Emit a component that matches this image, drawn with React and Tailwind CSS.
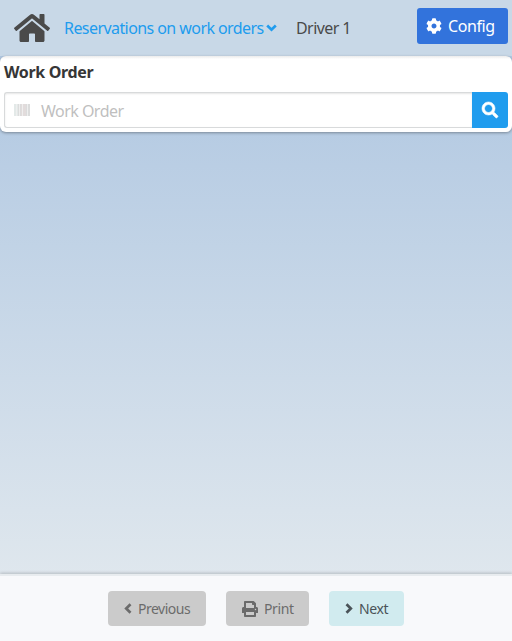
import { FaCog, FaSearch } from "react-icons/fa";

function HomeIcon({ className }) {
  return (
    <svg viewBox="0 0 576 512" fill="currentColor" className={className}>
      <path d="M488 312.7V456c0 13.3-10.7 24-24 24H348c-6.6 0-12-5.4-12-12V356c0-6.6-5.4-12-12-12h-72c-6.6 0-12 5.4-12 12v112c0 6.6-5.4 12-12 12H112c-13.3 0-24-10.7-24-24V312.7c0-3.6 1.6-7 4.4-9.3l188-154.8c4.4-3.6 10.8-3.6 15.3 0l188 154.8c2.7 2.3 4.3 5.7 4.3 9.3zm83.6-60.9L488 182.9V44.4c0-6.6-5.4-12-12-12h-56c-6.6 0-12 5.4-12 12V117l-89.5-73.7c-17.7-14.6-43.3-14.6-61 0L4.4 251.8c-5.1 4.2-5.8 11.8-1.6 16.9l25.5 31c4.2 5.1 11.8 5.8 16.9 1.6l235.2-193.7c4.4-3.6 10.8-3.6 15.3 0l235.2 193.7c5.1 4.2 12.7 3.5 16.9-1.6l25.5-31c4.2-5.2 3.4-12.7-1.7-16.9z" />
    </svg>
  );
}

function PrintIcon({ className }) {
  return (
    <svg viewBox="0 0 512 512" fill="currentColor" className={className}>
      <path d="M464 192h-16V81.941a24 24 0 0 0-7.029-16.97L383.029 7.029A24 24 0 0 0 366.059 0H88C74.745 0 64 10.745 64 24v168H48c-26.51 0-48 21.49-48 48v132c0 6.627 5.373 12 12 12h52v104c0 13.255 10.745 24 24 24h336c13.255 0 24-10.745 24-24V384h52c6.627 0 12-5.373 12-12V240c0-26.51-21.49-48-48-48zm-80 256H128v-96h256v96zM128 224V64h192v40c0 13.2 10.8 24 24 24h40v96H128zm304 72c-13.254 0-24-10.746-24-24s10.746-24 24-24 24 10.746 24 24-10.746 24-24 24z" />
    </svg>
  );
}

function BarcodeIcon({ className }) {
  return (
    <svg viewBox="0 0 16 12" className={className} shapeRendering="crispEdges">
      <path fill="#e3e9e8" d="M0 0h2v12H0zM3 0h1v12H3z" />
      <path fill="#dcdcdc" d="M4 0h1v12H4zM6 0h1v12H6z" />
      <path fill="#e2dcdc" d="M7 0h1v12H7zM9 0h3v12H9z" />
      <path fill="#dbdcdc" d="M12 0h1v12h-1zM14 0h2v12h-2z" />
      <path fill="#efefef" d="M2 0h1v12H2zM5 0h1v12H5zM8 0h1v12H8zM13 0h1v12h-1z" />
    </svg>
  );
}

function Chevron({ className, points, viewBox }) {
  return (
    <svg viewBox={viewBox} fill="none" stroke="currentColor" strokeWidth="2.7" className={className}>
      <polyline points={points} />
    </svg>
  );
}

function Header() {
  return (
    <header className="flex h-14 shrink-0 items-center bg-[#c8d8e7] pr-1 pl-3.5">
      <HomeIcon className="h-8 w-9 shrink-0 text-[#4a4a4a]" />
      <a className="ml-3.5 flex w-[214px] shrink-0 items-center whitespace-nowrap text-[#209cee]">
        <span className="w-[202px] shrink-0 tracking-[-0.57px]">Reservations on work orders</span>
        <Chevron className="h-2 w-[11px] shrink-0" viewBox="0 0 11 8" points="1.2,1.6 5.5,5.7 9.8,1.6" />
      </a>
      <span className="ml-[18px] tracking-[-0.58px] whitespace-nowrap text-[#4a4a4a]">Driver 1</span>
      <button className="mb-1 ml-auto flex h-9 w-[91px] items-center rounded-[3px] bg-[#3273dc] pl-[9px] text-white">
        <FaCog className="size-4 shrink-0" />
        <span className="ml-1.5 tracking-[-0.4px]">Config</span>
      </button>
    </header>
  );
}

function WorkOrderPanel() {
  return (
    <section className="h-[76px] shrink-0 rounded-md bg-white bg-linear-to-b from-[#ebebeb] to-white to-[3px] px-1 shadow-[0_1px_3px_rgba(10,10,10,0.35)]">
      <label className="block h-9 pt-1 leading-6 font-bold tracking-[-0.35px] text-[#363636]">
        Work Order
      </label>
      <div className="flex h-9">
        <div className="flex flex-1 items-center rounded-l-[3px] border border-r-0 border-[#d8dadb] bg-white pl-[9px] shadow-[inset_0_1px_2px_rgba(10,10,10,0.1)]">
          <BarcodeIcon className="h-3 w-4" />
          <span className="ml-[11px] pt-0.5 tracking-[-0.53px] text-[#bfbfbf]">Work Order</span>
        </div>
        <button className="flex w-9 items-center justify-center rounded-r-[3px] bg-[#209cee] text-white">
          <FaSearch className="size-4 overflow-visible" strokeWidth="18" />
        </button>
      </div>
    </section>
  );
}

function Footer() {
  return (
    <footer className="flex h-[67px] shrink-0 justify-center gap-5 border-t-2 border-[#e8ecef] bg-[#f8f9fb] pt-[15px] text-[14px] shadow-[0_-1px_3px_rgba(10,10,10,0.2)]">
      <button className="flex h-[35px] w-[98px] items-center rounded bg-[#cbcbcb] pl-4 text-[#6b6b6b]">
        <Chevron className="h-[11px] w-2" viewBox="0 0 8 11" points="6.5,1.2 2.2,5.5 6.5,9.8" />
        <span className="ml-1.5 tracking-[-0.5px]">Previous</span>
      </button>
      <button className="flex h-[35px] w-[83px] items-center rounded bg-[#cbcbcb] pl-4 text-[#6b6b6b]">
        <PrintIcon className="size-4" />
        <span className="ml-1.5 tracking-[-0.4px]">Print</span>
      </button>
      <button className="flex h-[35px] w-[75px] items-center rounded bg-[#d1ebef] pl-4 text-[#4a5358]">
        <Chevron className="h-[11px] w-2" viewBox="0 0 8 11" points="1.5,1.2 5.8,5.5 1.5,9.8" />
        <span className="ml-1.5 tracking-[-0.4px]">Next</span>
      </button>
    </footer>
  );
}

export default function App() {
  return (
    <div className="flex h-[641px] w-[512px] flex-col overflow-hidden bg-linear-to-b from-[#abc4e0] to-[#e5ebef] font-['Segoe_UI','Noto_Sans',sans-serif] text-base">
      <Header />
      <WorkOrderPanel />
      <main className="flex-1" />
      <Footer />
    </div>
  );
}
